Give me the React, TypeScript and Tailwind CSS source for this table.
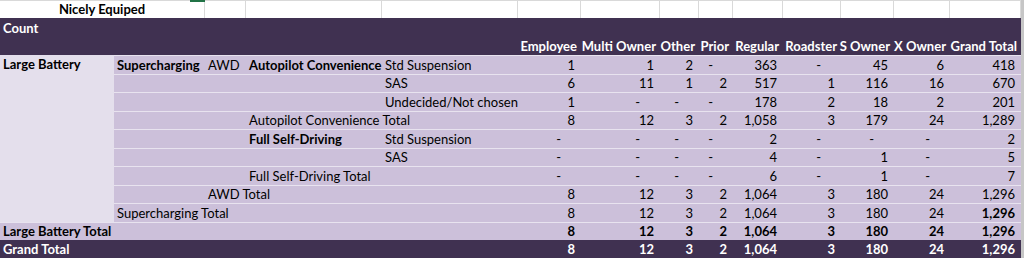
const grid =
  'grid grid-cols-[114px_91px_41px_136px_136px_63px_79px_39px_34px_50px_58px_53px_56px_71px]'
const inner =
  'grid grid-cols-[91px_41px_136px_136px_63px_79px_39px_34px_50px_58px_53px_56px_71px]'

const headers = ['Employee', 'Multi Owner', 'Other', 'Prior', 'Regular', 'Roadster', 'S Owner', 'X Owner', 'Grand Total']

type Val = number | string

interface BodyRow {
  a?: string
  b?: string
  c?: string
  d?: string
  e?: string
  bold?: ('b' | 'c' | 'd' | 'e')[]
  vals: Val[]
  h: string
  boldLast?: boolean
}

const rows: BodyRow[] = [
  { a: 'Large Battery', b: 'Supercharging', c: 'AWD', d: 'Autopilot Convenience', e: 'Std Suspension', bold: ['b', 'd'], vals: [1, 1, 2, '-', 363, '-', 45, 6, 418], h: 'h-[19px]' },
  { e: 'SAS', vals: [6, 11, 1, 2, 517, 1, 116, 16, 670], h: 'h-[18px]' },
  { e: 'Undecided/Not chosen', vals: [1, '-', '-', '-', 178, 2, 18, 2, 201], h: 'h-[19px]' },
  { d: 'Autopilot Convenience Total', vals: [8, 12, 3, 2, '1,058', 3, 179, 24, '1,289'], h: 'h-[18px]' },
  { d: 'Full Self-Driving', e: 'Std Suspension', bold: ['d'], vals: ['-', '-', '-', '-', 2, '-', '-', '-', 2], h: 'h-[19px]' },
  { e: 'SAS', vals: ['-', '-', '-', '-', 4, '-', 1, '-', 5], h: 'h-[18px]' },
  { d: 'Full Self-Driving Total', vals: ['-', '-', '-', '-', 6, '-', 1, '-', 7], h: 'h-[19px]' },
  { c: 'AWD Total', vals: [8, 12, 3, 2, '1,064', 3, 180, 24, '1,296'], h: 'h-[18px]' },
  { b: 'Supercharging Total', vals: [8, 12, 3, 2, '1,064', 3, 180, 24, '1,296'], h: 'h-[19px]', boldLast: true },
]

const totals: Val[] = [8, 12, 3, 2, '1,064', 3, 180, 24, '1,296']

// accounting format: dashes sit two digits further left than numbers
function Num({ v, bold }: { v: Val; bold?: boolean }) {
  const dash = v === '-'
  return (
    <div
      className={`flex items-center justify-end whitespace-nowrap ${dash ? 'pr-[20px]' : 'pr-[6px]'} ${bold ? 'font-bold' : ''}`}
    >
      {v}
    </div>
  )
}

function Label({ text, bold }: { text?: string; bold?: boolean }) {
  return (
    <div className={`flex items-center whitespace-nowrap pl-[3px] ${bold ? 'font-bold' : ''}`}>
      {text ?? ''}
    </div>
  )
}

export default function App() {
  return (
    <div className="flex w-[1024px] h-[258px] overflow-hidden bg-white text-[13px] leading-none text-black font-['Lato','Open_Sans',sans-serif]">
      <div className="w-[1021px] flex flex-col">
        {/* sheet row above the pivot */}
        <div className={`${grid} h-[18px] border-t border-[#d9d9d9] relative`}>
          <div className="col-span-2 flex items-center justify-center font-bold border-r border-[#d9d9d9]">
            Nicely Equiped
          </div>
          {Array.from({ length: 12 }).map((_, i) => (
            <div key={i} className="border-r border-[#d9d9d9]" />
          ))}
          <div className="absolute left-[190px] top-[-1px] w-[15px] h-[2px] bg-[#217346]" />
        </div>

        {/* pivot header */}
        <div className="bg-[#403151] text-white font-bold h-[37px] flex flex-col">
          <div className="h-[19px] flex items-center pl-[3px] pt-[1px]">Count</div>
          <div className={`${grid} h-[18px]`}>
            <div className="col-span-5" />
            {headers.map((h) => (
              <div key={h} className="flex items-center justify-end whitespace-nowrap pr-[4px]">
                {h}
              </div>
            ))}
          </div>
        </div>

        {/* body */}
        {rows.map((r, i) => {
          const bold = r.bold ?? []
          return (
            <div key={i} className={`${grid} ${r.h}`}>
              <div className="bg-[#e4dfec] flex items-center whitespace-nowrap pl-[3px] font-bold">{r.a ?? ''}</div>
              <div className={`col-span-13 ${inner} bg-[#ccc0da] border-t border-[#e8e3ef]`}>
                <Label text={r.b} bold={bold.includes('b')} />
                <Label text={r.c} bold={bold.includes('c')} />
                <Label text={r.d} bold={bold.includes('d')} />
                <Label text={r.e} bold={bold.includes('e')} />
                {r.vals.map((v, j) => (
                  <Num key={j} v={v} bold={r.boldLast && j === r.vals.length - 1} />
                ))}
              </div>
            </div>
          )
        })}

        <div className={`${grid} h-[18px] bg-[#ccc0da] border-t border-[#e8e3ef] font-bold`}>
          <div className="col-span-5 flex items-center whitespace-nowrap pl-[3px]">Large Battery Total</div>
          {totals.map((v, j) => (
            <Num key={j} v={v} bold />
          ))}
        </div>

        <div className={`${grid} h-[18px] bg-[#403151] text-white font-bold`}>
          <div className="col-span-5 flex items-center whitespace-nowrap pl-[3px]">Grand Total</div>
          {totals.map((v, j) => (
            <Num key={j} v={v} bold />
          ))}
        </div>
      </div>
      <div className="w-[3px] bg-[#c6c6c6]" />
    </div>
  )
}
